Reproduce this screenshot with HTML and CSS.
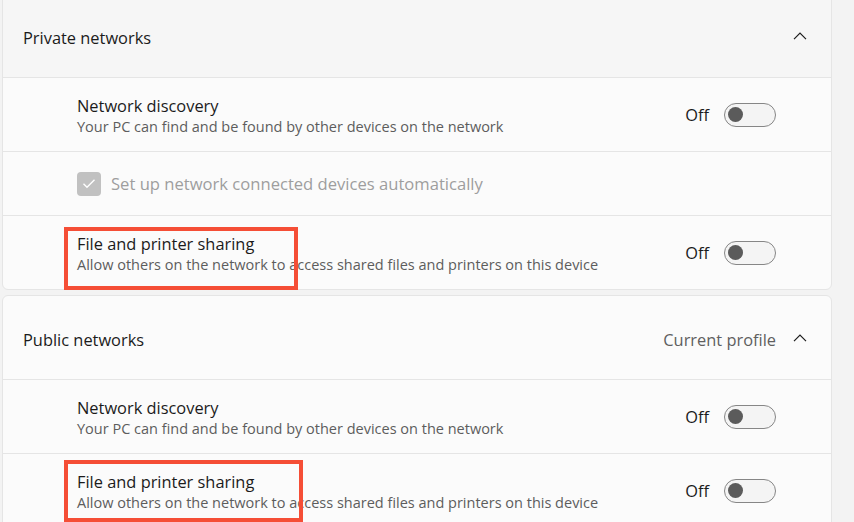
FILE: index.html
```html
<!DOCTYPE html>
<html lang="en">
<head>
<meta charset="utf-8">
<title>Network profiles</title>
<link rel="stylesheet" href="styles.css">
</head>
<body>
<main class="page">
  <section class="card card-first">
    <header class="card-head head-hover">
      <span class="head-title">Private networks</span>
      <span class="head-right">
        <svg class="chev" width="14" height="8" viewBox="0 0 14 8"><path d="M1 7.2 L7 1.2 L13 7.2" fill="none" stroke="#1b1b1b" stroke-width="1.2"/></svg>
      </span>
    </header>
    <div class="row">
      <div class="texts">
        <div class="title">Network discovery</div>
        <div class="sub">Your PC can find and be found by other devices on the network</div>
      </div>
      <div class="ctl"><span class="state">Off</span><span class="toggle"><span class="knob"></span></span></div>
    </div>
    <div class="row row-check">
      <span class="checkbox"><svg width="14" height="11" viewBox="0 0 14 11"><path d="M1.5 5.8 L5 9.2 L12.5 1.8" fill="none" stroke="#fff" stroke-width="1.4"/></svg></span>
      <span class="check-label">Set up network connected devices automatically</span>
    </div>
    <div class="row">
      <div class="texts">
        <div class="title">File and printer sharing</div>
        <div class="sub">Allow others on the network to access shared files and printers on this device</div>
      </div>
      <div class="ctl"><span class="state">Off</span><span class="toggle"><span class="knob"></span></span></div>
      <span class="mark mark-a"></span>
    </div>
  </section>

  <section class="card">
    <header class="card-head">
      <span class="head-title">Public networks</span>
      <span class="head-right">
        <span class="profile">Current profile</span>
        <svg class="chev" width="14" height="8" viewBox="0 0 14 8"><path d="M1 7.2 L7 1.2 L13 7.2" fill="none" stroke="#1b1b1b" stroke-width="1.2"/></svg>
      </span>
    </header>
    <div class="row">
      <div class="texts">
        <div class="title">Network discovery</div>
        <div class="sub">Your PC can find and be found by other devices on the network</div>
      </div>
      <div class="ctl"><span class="state">Off</span><span class="toggle"><span class="knob"></span></span></div>
    </div>
    <div class="row">
      <div class="texts">
        <div class="title">File and printer sharing</div>
        <div class="sub">Allow others on the network to access shared files and printers on this device</div>
      </div>
      <div class="ctl"><span class="state">Off</span><span class="toggle"><span class="knob"></span></span></div>
      <span class="mark mark-b"></span>
    </div>
  </section>
</main>
</body>
</html>
```
FILE: styles.css
```css
html, body {
  margin: 0;
  padding: 0;
}
body {
  background: #f3f3f3;
  font-family: "Open Sans", "Noto Sans", "Liberation Sans", sans-serif;
  color: #1b1b1b;
  overflow: hidden;
  height: 522px;
}
.page {
  display: flex;
  flex-direction: column;
  gap: 5px;
  padding: 0 22px 0 2px;
}
.card {
  background: #fbfbfb;
  border: 1px solid #e5e5e5;
  border-radius: 6px;
}
.card-first {
  margin-top: -7px;
}
.card-head {
  height: 84px;
  box-sizing: border-box;
  padding: 4px 24px 0 20px;
  display: flex;
  align-items: center;
  justify-content: space-between;
  border-bottom: 1px solid #e5e5e5;
}
.head-hover {
  background: #f6f6f6;
  border-radius: 6px 6px 0 0;
}
.head-title {
  font-size: 16.4px;
}
.head-right {
  display: flex;
  align-items: center;
  gap: 17px;
}
.profile {
  font-size: 16.4px;
  color: #5f5f5f;
}
.chev {
  display: block;
  margin-top: -4px;
}
.row {
  position: relative;
  height: 73px;
  display: flex;
  align-items: center;
  justify-content: space-between;
  padding: 0 55px 0 74px;
  border-bottom: 1px solid #e5e5e5;
}
.row:last-child {
  border-bottom: none;
}
.row-check {
  height: 63px;
  justify-content: flex-start;
  gap: 10px;
}
.texts {
  display: flex;
  flex-direction: column;
  padding-top: 3px;
}
.title {
  font-size: 16.4px;
  line-height: 22px;
}
.sub {
  font-size: 14.5px;
  line-height: 20px;
  color: #5d5d5d;
}
.ctl {
  display: flex;
  align-items: center;
  gap: 15px;
}
.state {
  font-size: 16.4px;
}
.toggle {
  width: 47px;
  height: 22px;
  border: 1px solid #868686;
  border-radius: 12px;
  background: #f4f4f4;
  display: flex;
  align-items: center;
  padding-left: 3px;
  box-sizing: content-box;
}
.knob {
  width: 15px;
  height: 15px;
  border-radius: 50%;
  background: #5b5b5b;
}
.checkbox {
  width: 24px;
  height: 24px;
  border-radius: 4px;
  background: #c1c1c1;
  display: flex;
  align-items: center;
  justify-content: center;
}
.check-label {
  font-size: 16.6px;
  color: #9e9e9e;
}
.mark {
  position: absolute;
  border: 4px solid #f54e36;
  box-sizing: border-box;
  pointer-events: none;
}
.mark-a {
  left: 61px;
  top: 11px;
  width: 234px;
  height: 63px;
}
.mark-b {
  left: 61px;
  top: 6px;
  width: 239px;
  height: 62px;
}
```
